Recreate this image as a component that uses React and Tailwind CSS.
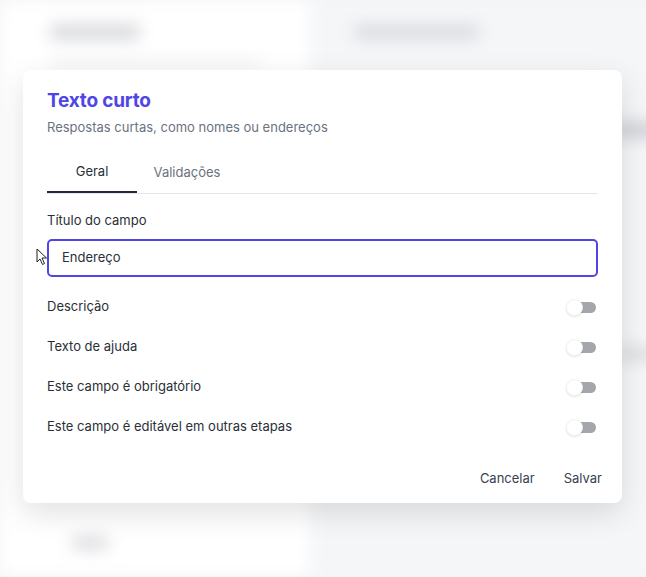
function Toggle() {
  return (
    <div className="relative w-[32px] h-[18px] flex items-center">
      <div className="absolute left-[12px] w-[18px] h-[11px] rounded-r-full bg-[#a3a6ab]" />
      <div className="absolute left-0 w-[17px] h-[17px] rounded-full bg-white shadow-[0_1px_2px_rgba(0,0,0,0.12)] border border-gray-100" />
    </div>
  );
}

function Row({ label }) {
  return (
    <div className="flex items-center justify-between h-[40px]">
      <span className="text-[13px] text-[#2a2f37]">{label}</span>
      <Toggle />
    </div>
  );
}

export default function App() {
  return (
    <div className="relative w-[646px] h-[577px] overflow-hidden bg-[#f4f5f7] font-['Inter',sans-serif]">
      {/* BLURRED BACKGROUND PAGE */}
      <div className="absolute inset-0 blur-[8px] flex">
        <div className="w-[312px] h-full bg-white px-[50px] pt-[24px] shadow-[4px_0_16px_rgba(0,0,0,0.04)]">
          <div className="w-[90px] h-[16px] rounded bg-[#d9dade]" />
          <div className="mt-[20px] w-[210px] h-[6px] rounded bg-[#ececee]" />
          <div className="mt-[470px] ml-[22px] w-[36px] h-[14px] rounded bg-[#dcdde0]" />
        </div>
        <div className="flex-1 h-full bg-[#f5f6f8] px-[44px] pt-[24px]">
          <div className="w-[125px] h-[16px] rounded bg-[#dcdde1]" />
          <div className="mt-[82px] ml-[260px] w-[60px] h-[16px] rounded bg-[#cfd0d4]" />
          <div className="mt-[210px] ml-[260px] w-[60px] h-[12px] rounded bg-[#d8d9dc]" />
        </div>
      </div>

      {/* MODAL */}
      <div className="absolute left-[23px] top-[70px] w-[599px] bg-white rounded-[8px] shadow-[0_10px_30px_rgba(0,0,0,0.12)] px-[24px] pt-[20px] pb-[14px]">
        <h2 className="text-[19px] font-bold text-[#4f46e5] leading-[22px] tracking-[-0.2px]">Texto curto</h2>
        <p className="mt-[6px] text-[13px] text-[#6b7280]">Respostas curtas, como nomes ou endereços</p>

        <div className="mt-[16px] flex border-b border-[#e5e7eb]">
          <div className="w-[90px] h-[39px] flex items-center justify-center text-[13px] text-[#2a2f37] border-b-2 border-[#1f2937] -mb-px">Geral</div>
          <div className="w-[100px] h-[39px] flex items-center justify-center text-[13px] text-[#6b7280]">Validações</div>
        </div>

        <div className="mt-[17px] text-[13px] text-[#2a2f37]">Título do campo</div>
        <div className="mt-[9px] h-[38px] rounded-[5px] border-2 border-[#4f46e5] flex items-center px-[13px] text-[13px] text-[#2a2f37]">
          Endereço
        </div>

        <div className="mt-[10px]">
          <Row label="Descrição" />
          <Row label="Texto de ajuda" />
          <Row label="Este campo é obrigatório" />
          <Row label="Este campo é editável em outras etapas" />
        </div>

        <div className="mt-[22px] flex justify-end gap-[29px] text-[13px] text-[#374151]">
          <button>Cancelar</button>
          <button className="-mr-[4px]">Salvar</button>
        </div>
      </div>

      {/* CURSOR */}
      <svg className="absolute left-[36px] top-[248px]" width="12" height="18" viewBox="0 0 12 18">
        <path d="M1 1 L1 14 L4 11 L6.5 16.5 L8.5 15.5 L6 10 L10.5 10 Z" fill="white" stroke="#222" strokeWidth="1" strokeLinejoin="round" />
      </svg>
    </div>
  );
}
